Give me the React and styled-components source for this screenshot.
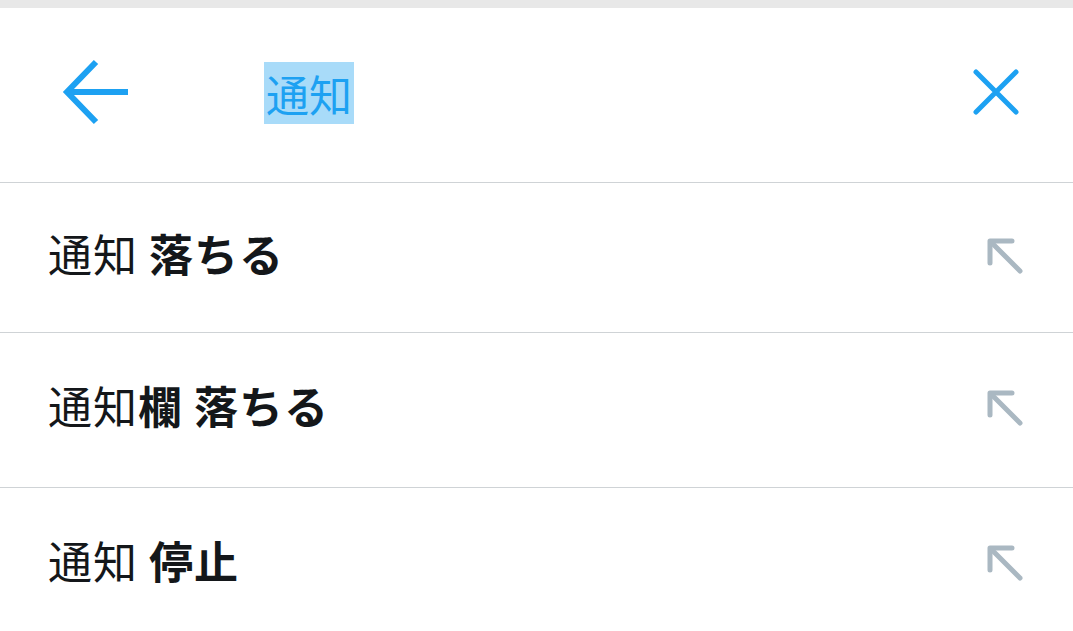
import React from 'react';
import styled, { createGlobalStyle } from 'styled-components';

const GlobalStyle = createGlobalStyle`
  html, body {
    margin: 0;
    padding: 0;
    background: #ffffff;
  }
  body {
    font-family: "Noto Sans CJK JP", "Noto Sans", sans-serif;
  }
`;

const Page = styled.div`
  width: 1073px;
  height: 631px;
  overflow: hidden;
  background: #ffffff;
  border-top: 8px solid #e8e8e8;
`;

const Header = styled.header`
  display: flex;
  align-items: center;
  height: 170px;
  padding: 0 53px 4px 60px;
  border-bottom: 1px solid #cfd3d6;
`;

const IconButton = styled.button`
  display: flex;
  align-items: center;
  justify-content: center;
  padding: 0;
  border: none;
  background: none;
  cursor: pointer;
  margin-bottom: ${(p) => p.$lift || 0}px;
`;

const Title = styled.div`
  flex: 1;
  margin-left: 132px;
  font-size: 43px;
  line-height: 61px;
  color: #1da1f2;

  span {
    background: #a8dbf9;
    padding: 0 2px;
  }
`;

const Row = styled.div`
  display: flex;
  align-items: center;
  justify-content: space-between;
  height: ${(p) => p.$height}px;
  padding: 0 48px 10px 48px;
  box-sizing: border-box;
  border-bottom: 1px solid #cfd3d6;
  font-size: 44px;
  color: #14171a;
`;

const Query = styled.div`
  white-space: pre;
  letter-spacing: 1px;
`;

const Bold = styled.b`
  font-weight: 700;
`;

const IconSlot = styled.div`
  display: flex;
  margin-top: 6px;
`;

const BackArrow = () => (
  <svg width="72" height="72" viewBox="0 0 72 72">
    <path d="M8 35 H68" stroke="#1da1f2" strokeWidth="6" fill="none" />
    <path d="M36 5 L7 35 L36 65" stroke="#1da1f2" strokeWidth="6" fill="none" />
  </svg>
);

const CloseIcon = () => (
  <svg width="50" height="50" viewBox="0 0 50 50">
    <path d="M6 6 L46 46 M46 6 L6 46" stroke="#1da1f2" strokeWidth="5" strokeLinecap="round" fill="none" />
  </svg>
);

// arrow pointing up-left: "fill the search box with this query"
const FillIcon = () => (
  <svg width="40" height="40" viewBox="0 0 40 40">
    <path d="M6 6 L35 35" stroke="#aab8c2" strokeWidth="5" strokeLinecap="round" fill="none" />
    <path d="M27 5 H5 V27" stroke="#aab8c2" strokeWidth="5" strokeLinecap="round" strokeLinejoin="round" fill="none" />
  </svg>
);

const suggestions = [
  { id: 1, height: 150, plain: '通知', bold: ' 落ちる' },
  { id: 2, height: 155, plain: '通知', bold: '欄 落ちる' },
  { id: 3, height: 155, plain: '通知', bold: ' 停止' },
];

export default function App() {
  return (
    <>
      <GlobalStyle />
      <Page>
        <Header>
          <IconButton aria-label="戻る">
            <BackArrow />
          </IconButton>
          <Title>
            <span>通知</span>
          </Title>
          <IconButton aria-label="クリア" $lift={4}>
            <CloseIcon />
          </IconButton>
        </Header>
        {suggestions.map((s) => (
          <Row key={s.id} $height={s.height}>
            <Query>
              {s.plain}
              <Bold>{s.bold}</Bold>
            </Query>
            <IconSlot>
              <FillIcon />
            </IconSlot>
          </Row>
        ))}
      </Page>
    </>
  );
}
